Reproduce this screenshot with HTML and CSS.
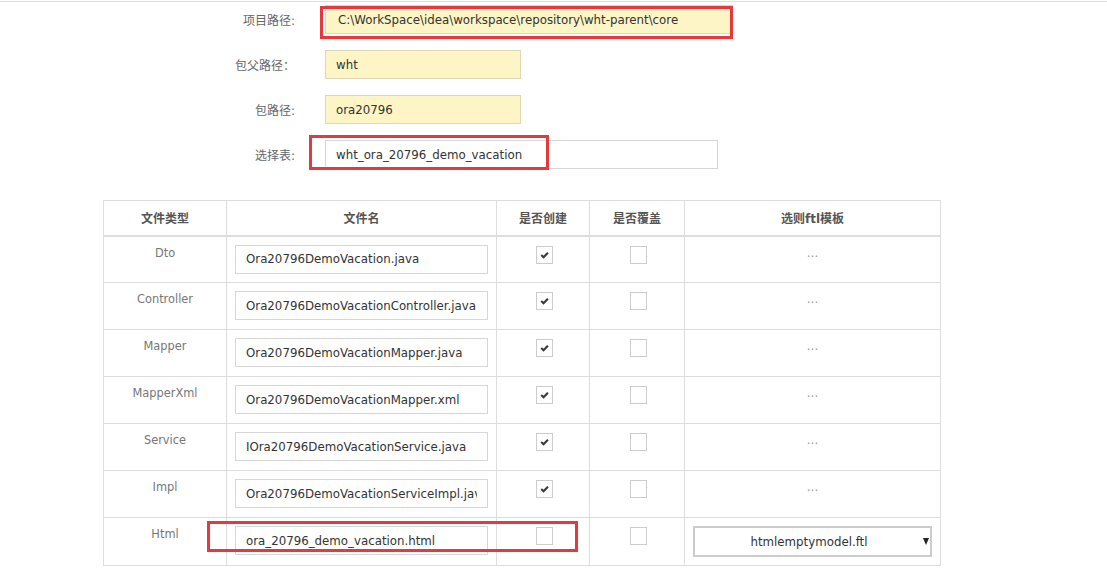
FILE: index.html
```html
<!DOCTYPE html>
<html lang="zh-CN">
<head>
    <meta charset="UTF-8">
    <meta name="viewport" content="width=device-width, initial-scale=1.0">
    <title>代码生成</title>
    <link rel="stylesheet" href="styles.css">
</head>
<body>
    <div class="page">
        <!-- 基本配置 -->
        <div class="config">
            <div class="field">
                <label for="project-path">项目路径:</label>
                <input type="text" id="project-path" class="text-input filled path" value="C:\WorkSpace\idea\workspace\repository\wht-parent\core" readonly>
            </div>
            <div class="field">
                <label for="parent-package">包父路径：</label>
                <input type="text" id="parent-package" class="text-input filled short" value="wht" readonly>
            </div>
            <div class="field">
                <label for="package">包路径:</label>
                <input type="text" id="package" class="text-input filled short" value="ora20796" readonly>
            </div>
            <div class="field">
                <label for="table-name">选择表:</label>
                <input type="text" id="table-name" class="text-input table" value="wht_ora_20796_demo_vacation" readonly>
            </div>
        </div>

        <!-- 文件列表 -->
        <table class="files">
            <colgroup>
                <col class="c-type">
                <col class="c-name">
                <col class="c-create">
                <col class="c-cover">
                <col class="c-ftl">
            </colgroup>
            <thead>
                <tr>
                    <th>文件类型</th>
                    <th>文件名</th>
                    <th>是否创建</th>
                    <th>是否覆盖</th>
                    <th>选则ftl模板</th>
                </tr>
            </thead>
            <tbody>
                <tr>
                    <td class="type">Dto</td>
                    <td><input type="text" class="text-input name" value="Ora20796DemoVacation.java" readonly></td>
                    <td><span class="check"><svg viewBox="0 0 17 17"><path d="M4.8 8.6 L7.4 11 L12.4 6"/></svg></span></td>
                    <td><span class="check"></span></td>
                    <td class="dots">...</td>
                </tr>
                <tr>
                    <td class="type">Controller</td>
                    <td><input type="text" class="text-input name" value="Ora20796DemoVacationController.java" readonly></td>
                    <td><span class="check"><svg viewBox="0 0 17 17"><path d="M4.8 8.6 L7.4 11 L12.4 6"/></svg></span></td>
                    <td><span class="check"></span></td>
                    <td class="dots">...</td>
                </tr>
                <tr>
                    <td class="type">Mapper</td>
                    <td><input type="text" class="text-input name" value="Ora20796DemoVacationMapper.java" readonly></td>
                    <td><span class="check"><svg viewBox="0 0 17 17"><path d="M4.8 8.6 L7.4 11 L12.4 6"/></svg></span></td>
                    <td><span class="check"></span></td>
                    <td class="dots">...</td>
                </tr>
                <tr>
                    <td class="type">MapperXml</td>
                    <td><input type="text" class="text-input name" value="Ora20796DemoVacationMapper.xml" readonly></td>
                    <td><span class="check"><svg viewBox="0 0 17 17"><path d="M4.8 8.6 L7.4 11 L12.4 6"/></svg></span></td>
                    <td><span class="check"></span></td>
                    <td class="dots">...</td>
                </tr>
                <tr>
                    <td class="type">Service</td>
                    <td><input type="text" class="text-input name" value="IOra20796DemoVacationService.java" readonly></td>
                    <td><span class="check"><svg viewBox="0 0 17 17"><path d="M4.8 8.6 L7.4 11 L12.4 6"/></svg></span></td>
                    <td><span class="check"></span></td>
                    <td class="dots">...</td>
                </tr>
                <tr>
                    <td class="type">Impl</td>
                    <td><input type="text" class="text-input name" value="Ora20796DemoVacationServiceImpl.java" readonly></td>
                    <td><span class="check"><svg viewBox="0 0 17 17"><path d="M4.8 8.6 L7.4 11 L12.4 6"/></svg></span></td>
                    <td><span class="check"></span></td>
                    <td class="dots">...</td>
                </tr>
                <tr>
                    <td class="type">Html</td>
                    <td><input type="text" class="text-input name" value="ora_20796_demo_vacation.html" readonly></td>
                    <td><span class="check"></span></td>
                    <td><span class="check"></span></td>
                    <td>
                        <div class="select">
                            <span class="select-text">htmlemptymodel.ftl</span>
                            <span class="select-arrow"></span>
                        </div>
                    </td>
                </tr>
            </tbody>
        </table>
    </div>

    <!-- 标注框 -->
    <div class="mark mark-path"></div>
    <div class="mark mark-table"></div>
    <div class="mark mark-html"></div>
</body>
</html>
```

FILE: styles.css
```css
* {
    margin: 0;
    padding: 0;
    box-sizing: border-box;
}
body {
    position: relative;
    padding-top: 1px;
    font-family: "DejaVu Sans", "Noto Sans CJK SC", sans-serif;
    font-size: 12px;
    color: #333;
    background: #fff;
}
.page {
    border-top: 1px solid #dedede;
    padding-top: 3px;
    min-height: 566px;
}
.config {
    display: flex;
    flex-direction: column;
    gap: 16px;
}
.field {
    display: grid;
    grid-template-columns: 295px auto;
    column-gap: 30px;
    align-items: center;
}
.field label {
    text-align: right;
    color: #666;
    font-size: 12px;
}
.text-input {
    display: block;
    height: 29px;
    padding: 0 10px;
    border: 1px solid #d6d6d6;
    background: #fff;
    font-family: "DejaVu Sans", sans-serif;
    font-size: 11.8px;
    color: #333;
    outline: none;
}
.text-input.filled {
    background: #fdf5c6;
    border-color: #dcd7b4;
}
.path {
    width: 408px;
    padding-left: 12px;
}
.short {
    width: 196px;
}
.table {
    width: 393px;
}
.files {
    margin: 31px 0 0 103px;
    width: 837px;
    table-layout: fixed;
    border-collapse: collapse;
}
.c-type { width: 123px; }
.c-name { width: 270px; }
.c-create { width: 93px; }
.c-cover { width: 95px; }
.c-ftl { width: 256px; }
.files th,
.files td {
    border: 1px solid #dddddd;
    text-align: center;
}
.files th {
    height: 35px;
    border-bottom: 2px solid #dddddd;
    font-size: 12px;
    font-weight: bold;
    color: #555;
}
.files td {
    height: 47px;
    padding: 8px;
    vertical-align: top;
    line-height: 16px;
}
.files td.type {
    color: #777;
    font-size: 11.4px;
}
.text-input.name {
    width: 100%;
    padding: 0 10px;
}
.check {
    display: inline-block;
    width: 17px;
    height: 18px;
    margin: 1px 0 0 2px;
    border: 1px solid #cccccc;
    background: #fff;
    vertical-align: top;
}
.check svg {
    display: block;
    width: 15px;
    height: 16px;
}
.check svg path {
    fill: none;
    stroke: #3a3a3a;
    stroke-width: 2.4;
}
.dots {
    color: #999;
    font-size: 12px;
}
.select {
    display: flex;
    align-items: center;
    height: 31px;
    border: 2px solid #cccccc;
    background: #fff;
    font-size: 11.8px;
    color: #333;
}
.select-text {
    flex: 1;
    text-align: center;
}
.select-arrow {
    width: 0;
    height: 0;
    margin-right: 1px;
    border-left: 3.5px solid transparent;
    border-right: 3.5px solid transparent;
    border-top: 7px solid #222;
}
.mark {
    position: absolute;
    border: 3px solid #e5393e;
}
.mark-path {
    left: 320px;
    top: 6px;
    width: 413px;
    height: 33px;
}
.mark-table {
    left: 309px;
    top: 135px;
    width: 240px;
    height: 35px;
}
.mark-html {
    left: 207px;
    top: 521px;
    width: 371px;
    height: 31px;
}
```
